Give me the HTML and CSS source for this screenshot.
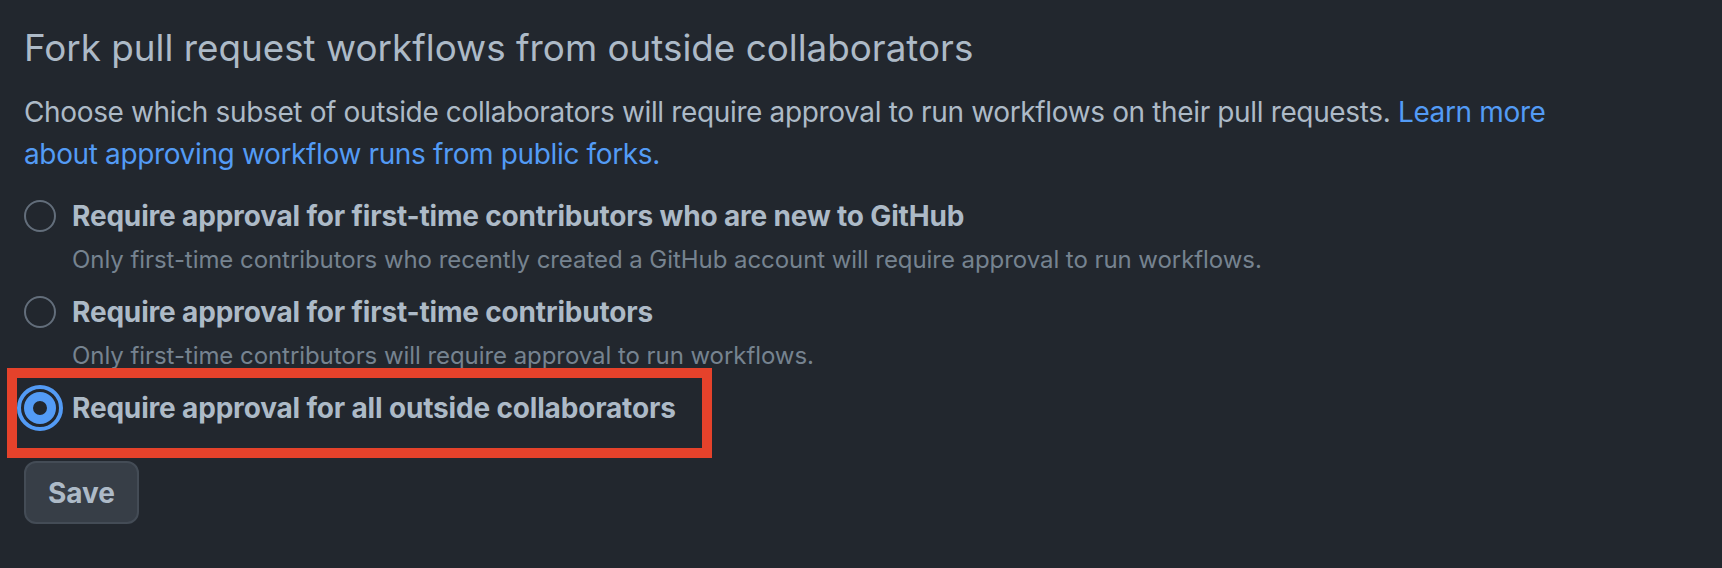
FILE: index.html
```html
<!DOCTYPE html>
<html lang="en">
<head>
<meta charset="utf-8">
<title>Fork pull request workflows</title>
<link rel="stylesheet" href="styles.css">
</head>
<body>
<main class="section">
  <h2 class="heading">Fork pull request workflows from outside collaborators</h2>
  <p class="intro">Choose which subset of outside collaborators will require approval to run workflows on their pull requests. <a class="link" href="#">Learn more about approving workflow runs from public forks.</a></p>
  <form class="options">
    <label class="option">
      <input class="radio" type="radio" name="approval">
      <span class="option-body">
        <span class="option-title">Require approval for first-time contributors who are new to GitHub</span>
        <span class="option-note">Only first-time contributors who recently created a GitHub account will require approval to run workflows.</span>
      </span>
    </label>
    <label class="option">
      <input class="radio" type="radio" name="approval">
      <span class="option-body">
        <span class="option-title">Require approval for first-time contributors</span>
        <span class="option-note">Only first-time contributors will require approval to run workflows.</span>
      </span>
    </label>
    <label class="option option-selected">
      <input class="radio" type="radio" name="approval" checked>
      <span class="option-body">
        <span class="option-title">Require approval for all outside collaborators</span>
      </span>
      <span class="highlight"></span>
    </label>
    <button class="btn" type="button">Save</button>
  </form>
</main>
</body>
</html>
```

FILE: styles.css
```css
html, body {
  margin: 0;
  padding: 0;
  background: #22272e;
}

body {
  font-family: Inter, "Noto Sans", "Liberation Sans", sans-serif;
  color: #adbac7;
  width: 1722px;
  height: 568px;
  overflow: hidden;
}

.section {
  padding: 25px 0 0 24px;
  width: 1560px;
}

.heading {
  margin: 0;
  font-size: 36.8px;
  line-height: 45px;
  font-weight: 400;
  color: #adbac7;
}

.intro {
  margin: 21px 0 0;
  font-size: 28px;
  line-height: 42px;
  letter-spacing: -0.36px;
  color: #adbac7;
}

.link {
  color: #539bf5;
  text-decoration: none;
}

.options {
  display: flex;
  flex-direction: column;
  align-items: flex-start;
  margin-top: 20px;
}

.option {
  position: relative;
  display: flex;
  align-items: flex-start;
  gap: 16px;
  margin-bottom: 13px;
}

.radio {
  appearance: none;
  -webkit-appearance: none;
  margin: 5px 0 0;
  width: 32px;
  height: 32px;
  border-radius: 50%;
  border: 2px solid #636e7b;
  background: #22272e;
  flex: none;
}

.radio:checked {
  border: 9px solid #539bf5;
  outline: 4px solid #539bf5;
  outline-offset: 3px;
}

.option-body {
  display: flex;
  flex-direction: column;
  gap: 5px;
}

.option-title {
  font-size: 28px;
  line-height: 42px;
  font-weight: 700;
  letter-spacing: -0.17px;
  color: #adbac7;
}

.option-note {
  font-size: 24px;
  line-height: 36px;
  letter-spacing: -0.06px;
  color: #768390;
}

.option-selected {
  margin-bottom: 32px;
}

.highlight {
  position: absolute;
  left: -17px;
  top: -19px;
  width: 705px;
  height: 90px;
  box-sizing: border-box;
  border: 10px solid #e5422b;
  pointer-events: none;
}

.btn {
  font-family: inherit;
  font-size: 28px;
  font-weight: 700;
  line-height: 42px;
  color: #adbac7;
  background: #373e47;
  border: 2px solid #444c56;
  border-radius: 12px;
  width: 115px;
  height: 63px;
  padding: 0;
}
```
